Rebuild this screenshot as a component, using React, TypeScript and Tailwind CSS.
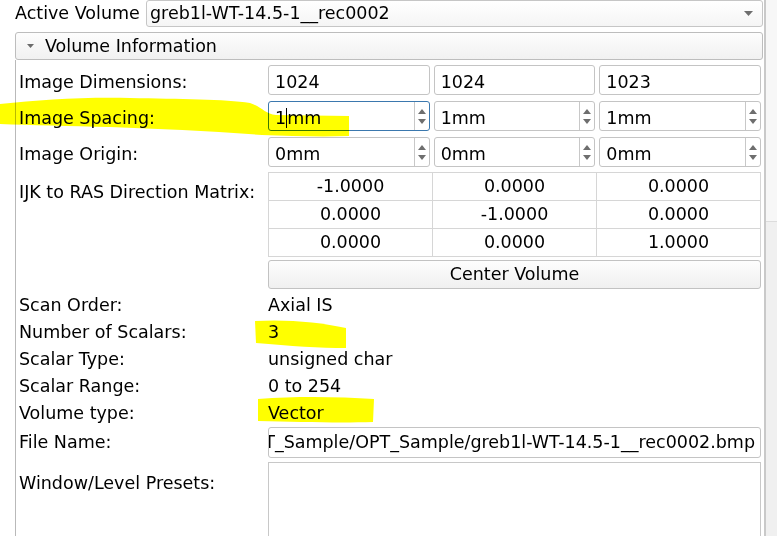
import React from "react";

function Arrows() {
  return (
    <div className="flex h-full w-[15px] shrink-0 flex-col items-center justify-center gap-[5px] border-l border-[#c8c8c8]">
      <svg width="8" height="5" viewBox="0 0 8 5">
        <path d="M4 0 L8 5 L0 5 Z" fill="#6e6e6e" />
      </svg>
      <svg width="8" height="5" viewBox="0 0 8 5">
        <path d="M0 0 L8 0 L4 5 Z" fill="#6e6e6e" />
      </svg>
    </div>
  );
}

function Field({ value }: { value: string }) {
  return (
    <div className="flex h-full items-center rounded-[3px] border border-[#c4c4c4] bg-white pl-[6px] pt-[4px]">
      {value}
    </div>
  );
}

function Spin({ value, focused }: { value: string; focused?: boolean }) {
  return (
    <div
      className={
        "flex h-full items-center rounded-[3px] border bg-white " +
        (focused ? "border-[#3b78ae]" : "border-[#c4c4c4]")
      }
    >
      <div className="flex h-full flex-1 items-center pl-[6px] pt-[4px]">
        {focused ? (
          <>
            <span>1</span>
            <span className="h-[20px] w-[1px] bg-black" />
            <span>mm</span>
          </>
        ) : (
          value
        )}
      </div>
      <Arrows />
    </div>
  );
}

const matrix = [
  ["-1.0000", "0.0000", "0.0000"],
  ["0.0000", "-1.0000", "0.0000"],
  ["0.0000", "0.0000", "1.0000"],
];

const info = [
  ["Scan Order:", "Axial IS"],
  ["Number of Scalars:", "3"],
  ["Scalar Type:", "unsigned char"],
  ["Scalar Range:", "0 to 254"],
  ["Volume type:", "Vector"],
];

export default function App() {
  return (
    <div className="relative flex h-[536px] w-[777px] overflow-hidden bg-white font-['DejaVu_Sans',sans-serif] text-[17.5px] leading-[21px] text-black">
      <div className="flex w-[766px] shrink-0 flex-col border-r-2 border-[#c9c9c9] pl-[15px] pr-[1px]">
        {/* active volume */}
        <div className="flex h-[27px] shrink-0 items-center">
          <span className="w-[131px] shrink-0">Active Volume</span>
          <div className="flex h-full flex-1 items-center justify-between rounded-[3px] border border-[#c6c6c6] bg-gradient-to-b from-white to-[#f5f5f5] pl-[3px] pr-[9px]">
            <span>greb1l-WT-14.5-1__rec0002</span>
            <svg width="9" height="5" viewBox="0 0 9 5">
              <path d="M0 0 L9 0 L4.5 5 Z" fill="#6e6e6e" />
            </svg>
          </div>
        </div>

        {/* collapsible header */}
        <div className="mt-[5px] flex h-[28px] shrink-0 items-center rounded-[3px] border border-[#bdbdbd] bg-gradient-to-b from-[#fdfdfd] to-[#f1f1f1] pl-[11px]">
          <svg width="7" height="4" viewBox="0 0 7 4">
            <path d="M0 0 L7 0 L3.5 4 Z" fill="#6b6b6b" />
          </svg>
          <span className="ml-[11px]">Volume Information</span>
        </div>

        {/* frame */}
        <div className="flex flex-1 flex-col border-l border-[#b9b9b9] pl-[3px]">
          <div className="mt-[5px] flex h-[30px]">
            <div className="flex w-[249px] shrink-0 items-center pt-[4px]">Image Dimensions:</div>
            <div className="grid w-[493px] grid-cols-3 gap-[4px]">
              <Field value="1024" />
              <Field value="1024" />
              <Field value="1023" />
            </div>
          </div>
          <div className="mt-[6px] flex h-[30px]">
            <div className="flex w-[249px] shrink-0 items-center pt-[4px]">Image Spacing:</div>
            <div className="grid w-[493px] grid-cols-3 gap-[4px]">
              <Spin value="1mm" focused />
              <Spin value="1mm" />
              <Spin value="1mm" />
            </div>
          </div>
          <div className="mt-[6px] flex h-[30px]">
            <div className="flex w-[249px] shrink-0 items-center pt-[4px]">Image Origin:</div>
            <div className="grid w-[493px] grid-cols-3 gap-[4px]">
              <Spin value="0mm" />
              <Spin value="0mm" />
              <Spin value="0mm" />
            </div>
          </div>

          {/* matrix */}
          <div className="mt-[5px] flex">
            <div className="w-[249px] shrink-0 pt-[10px]">IJK to RAS Direction Matrix:</div>
            <div className="grid w-[493px] grid-cols-3 border-l border-t border-[#d6d6d6]">
              {matrix.flat().map((v, i) => (
                <div
                  key={i}
                  className="flex h-[28px] items-center justify-center border-b border-r border-[#d6d6d6] bg-white"
                >
                  {v}
                </div>
              ))}
            </div>
          </div>

          <div className="mt-[3px] flex h-[29px]">
            <div className="w-[249px] shrink-0" />
            <div className="flex w-[493px] items-center justify-center rounded-[3px] border border-[#c2c2c2] bg-gradient-to-b from-[#fdfdfd] to-[#f0f0f0]">
              Center Volume
            </div>
          </div>

          <div className="mt-[3px] flex flex-col">
            {info.map(([k, v]) => (
              <div key={k} className="flex h-[27px] items-center">
                <div className="w-[249px] shrink-0">{k}</div>
                <div>{v}</div>
              </div>
            ))}
          </div>

          <div className="flex h-[31px]">
            <div className="flex w-[249px] shrink-0 items-center">File Name:</div>
            <div className="flex w-[493px] items-center justify-end overflow-hidden whitespace-nowrap rounded-[3px] border border-[#c4c4c4] bg-white pr-[5px]">
              <span className="shrink-0">C:/Data/OPT_Sample/OPT_Sample/greb1l-WT-14.5-1__rec0002.bmp</span>
            </div>
          </div>

          <div className="mt-[4px] flex">
            <div className="w-[249px] shrink-0 pt-[11px]">Window/Level Presets:</div>
            <div className="h-[100px] w-[493px] border border-[#c8c8c8] bg-white" />
          </div>
        </div>
      </div>

      {/* right strip */}
      <div className="flex flex-1 flex-col">
        <div className="h-[222px] border-b border-[#dcdcdc] bg-[#f7f7f7]" />
        <div className="flex-1 bg-[#f0f0f0]" />
      </div>

      {/* highlighter marks */}
      <svg
        className="pointer-events-none absolute inset-0 mix-blend-multiply"
        width="777"
        height="536"
        viewBox="0 0 777 536"
      >
        <path
          d="M0 104 C40 100 80 97 130 98 C180 99 225 99 250 103 C262 107 265 114 276 115 L349 116 L349 136 C320 137 290 136 262 135 C210 131 160 129 110 127 C70 126 30 125 0 124 Z"
          fill="#ffff00"
        />
        <path
          d="M255 321 C285 319 320 322 346 328 L346 348 C320 348 290 346 256 343 Z"
          fill="#ffff00"
        />
        <path
          d="M258 399 C300 396 340 397 374 399 L373 422 C340 423 300 422 258 421 Z"
          fill="#ffff00"
        />
      </svg>
    </div>
  );
}
